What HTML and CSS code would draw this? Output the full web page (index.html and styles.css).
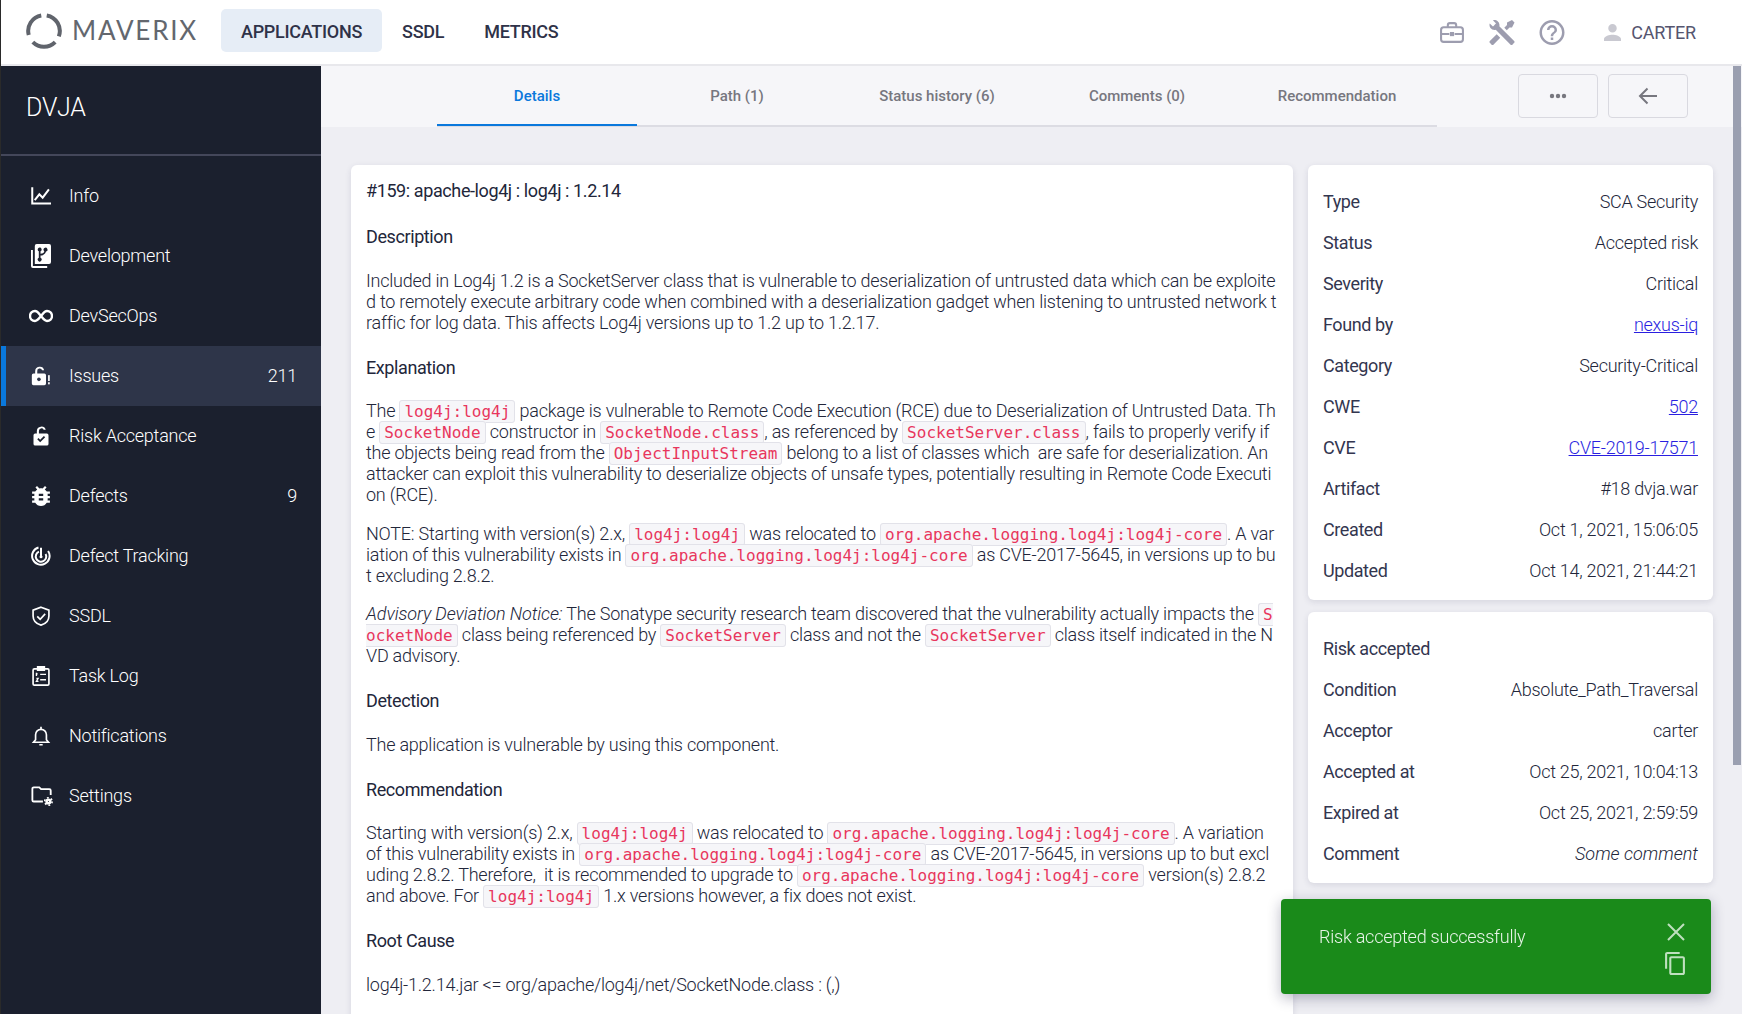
FILE: index.html
```html
<!DOCTYPE html>
<html lang="en">
<head>
    <meta charset="UTF-8">
    <title>Maverix - Issue details</title>
    <link rel="stylesheet" href="styles.css">
</head>
<body>
    <header class="topbar">
        <div class="logo">
            <svg class="logo-mark" viewBox="0 0 36 36" fill="none" stroke="#60646c" stroke-width="4">
                <path d="M15.26 2.44A15.800 15.800 0 0 0 2.74 22.090"/>
                <path d="M20.74 2.44A15.800 15.800 0 0 1 32.850 23.400"/>
                <path d="M29.170 29.170A15.800 15.800 0 0 1 6.830 29.170"/>
            </svg>
            <span class="logo-text">MAVERIX</span>
        </div>
        <nav class="topnav">
            <a class="topnav-link active">APPLICATIONS</a>
            <a class="topnav-link">SSDL</a>
            <a class="topnav-link">METRICS</a>
        </nav>
        <div class="top-tools">
            <svg class="tool-icon" viewBox="0 0 24 24" fill="none" stroke="#9d9daf" stroke-width="2">
                <path d="M8 7V5a2 2 0 0 1 2-2h4a2 2 0 0 1 2 2v2"/>
                <rect x="1.500" y="7" width="21" height="14" rx="2.500"/>
                <path d="M1.500 13.500H9.500M14.500 13.500H22.500"/>
                <rect x="10" y="11.500" width="4" height="4" fill="#9d9daf" stroke="none"/>
            </svg>
            <svg class="tool-icon" viewBox="2 2 20 20" fill="#9d9daf"><path d="M21.710 20.290L20.290 21.710A1 1 0 0 1 18.880 21.710L7 9.850A3.810 3.810 0 0 1 6 10A4 4 0 0 1 2.220 4.700L4.760 7.240L5.290 6.710L6.710 5.290L7.240 4.760L4.700 2.220A4 4 0 0 1 10 6A3.810 3.810 0 0 1 9.850 7L21.710 18.880A1 1 0 0 1 21.710 20.290M2.290 18.880A1 1 0 0 0 2.290 20.290L3.710 21.710A1 1 0 0 0 5.120 21.710L10.590 16.250L7.760 13.420M20 2L16 4V6L13.830 8.170L15.830 10.170L18 8H20L22 4Z"/></svg>
            <svg class="tool-icon" viewBox="2 2 20 20" fill="#9d9daf"><path d="M11,18H13V16H11V18M12,2A10,10 0 0,0 2,12A10,10 0 0,0 12,22A10,10 0 0,0 22,12A10,10 0 0,0 12,2M12,20C7.590,20 4,16.410 4,12C4,7.590 7.590,4 12,4C16.410,4 20,7.590 20,12C20,16.410 16.410,20 12,20M12,6A4,4 0 0,0 8,10H10A2,2 0 0,1 12,8A2,2 0 0,1 14,10C14,12 11,11.750 11,15H13C13,12.750 16,12.500 16,10A4,4 0 0,0 12,6Z"/></svg>
            <div class="user">
                <svg class="user-icon" viewBox="4 4 16 16" fill="#c9c9d1"><path d="M12 12c2.210 0 4-1.790 4-4s-1.790-4-4-4-4 1.790-4 4 1.790 4 4 4zm0 2c-2.670 0-8 1.340-8 4v2h16v-2c0-2.660-5.330-4-8-4z"/></svg>
                <span>CARTER</span>
            </div>
        </div>
    </header>

    <div class="app">
        <aside class="sidebar">
            <div class="sidebar-title">DVJA</div>
            <ul class="menu">
                <li class="menu-item">
                    <svg class="menu-icon" viewBox="0 0 24 24" fill="none" stroke="#fff" stroke-width="2.400"><path d="M1.500 1.500V21H24"/><path d="M4.500 17L10 10L14 14L21.500 4"/></svg>
                    <span>Info</span>
                </li>
                <li class="menu-item">
                    <svg class="menu-icon" viewBox="2 0 21 24" preserveAspectRatio="none" fill="#fff"><path d="M2 6H4V22H19V24H4A2 2 0 0 1 2 22Z"/><path fill-rule="evenodd" d="M8 0H21A2 2 0 0 1 23 2V18A2 2 0 0 1 21 20H6V2A2 2 0 0 1 8 0ZM11 3.500A2 2 0 0 0 10.200 7.300V13.700A2 2 0 1 0 12 13.700V11.500C14.500 11.500 17 10.500 17.800 7.600A2 2 0 1 0 16 7.200C15.600 9 13.800 9.600 12 9.700V7.300A2 2 0 0 0 11 3.500Z"/></svg>
                    <span>Development</span>
                </li>
                <li class="menu-item">
                    <svg class="menu-icon menu-icon-wide" viewBox="0 0 24 24" fill="none" stroke="#fff" stroke-width="2.400"><path d="M12 12C10 9.500 8.500 7 6 7A5 5 0 0 0 6 17C8.500 17 10 14.500 12 12C14 9.500 15.500 7 18 7A5 5 0 0 1 18 17C15.500 17 14 14.500 12 12Z"/></svg>
                    <span>DevSecOps</span>
                </li>
                <li class="menu-item active">
                    <svg class="menu-icon" viewBox="0 0 24 24" fill="#fff"><path d="M5 9V6.500A5.500 5.500 0 0 1 15.800 5H13.300A3 3 0 0 0 7.500 6.500V9H16A2 2 0 0 1 18 11V21A2 2 0 0 1 16 23H3A2 2 0 0 1 1 21V11A2 2 0 0 1 3 9Z"/><circle cx="9.500" cy="16" r="2.200" fill="#2e3549"/><rect x="20.500" y="11" width="2" height="7"/><rect x="20.500" y="19.500" width="2" height="2.500"/></svg>
                    <span>Issues</span>
                    <span class="menu-count">211</span>
                </li>
                <li class="menu-item">
                    <svg class="menu-icon" viewBox="0 0 24 24" fill="#fff"><path fill-rule="evenodd" d="M7 9V6A5.500 5.500 0 0 1 17.700 4.500H15.200A3 3 0 0 0 9.500 6V9H19A2 2 0 0 1 21 11V21.500A2 2 0 0 1 19 23.500H5A2 2 0 0 1 3 21.500V11A2 2 0 0 1 5 9ZM7.500 16L9 14.500L11 16.500L15.500 12L17 13.500L11 19.500Z"/></svg>
                    <span>Risk Acceptance</span>
                </li>
                <li class="menu-item">
                    <svg class="menu-icon" viewBox="3 2 18 20" fill="#fff"><path d="M14,12H10V10H14M14,16H10V14H14M20,8H17.190C16.740,7.220 16.120,6.550 15.370,6.040L17,4.410L15.590,3L13.420,5.170C12.960,5.060 12.500,5 12,5C11.500,5 11.040,5.060 10.590,5.170L8.410,3L7,4.410L8.620,6.040C7.880,6.550 7.260,7.220 6.810,8H4V10H6.090C6.040,10.330 6,10.660 6,11V12H4V14H6V15C6,15.340 6.040,15.670 6.090,16H4V18H6.810C7.850,19.790 9.780,21 12,21C14.220,21 16.150,19.790 17.190,18H20V16H17.910C17.960,15.670 18,15.340 18,15V14H20V12H18V11C18,10.660 17.960,10.330 17.910,10H20V8Z"/></svg>
                    <span>Defects</span>
                    <span class="menu-count">9</span>
                </li>
                <li class="menu-item">
                    <svg class="menu-icon" viewBox="0 0 24 24" fill="none" stroke="#fff" stroke-width="2.400"><path d="M9 1.800A10.500 10.500 0 1 0 20.500 6"/><path d="M9.500 6.800A6.300 6.300 0 1 0 17.500 9.500"/><path d="M12 2V13"/><circle cx="12" cy="13" r="1.800" fill="#fff" stroke="none"/></svg>
                    <span>Defect Tracking</span>
                </li>
                <li class="menu-item">
                    <svg class="menu-icon" viewBox="0 0 24 24" fill="none" stroke="#fff" stroke-width="2"><path d="M12 1.500L21.500 5V12C21.500 17.500 17.500 21.500 12 23C6.500 21.500 2.500 17.500 2.500 12V5Z"/><path d="M7.500 12.500L11 16L17 9.500"/></svg>
                    <span>SSDL</span>
                </li>
                <li class="menu-item">
                    <svg class="menu-icon" viewBox="0 0 24 24" fill="none" stroke="#fff" stroke-width="2"><rect x="2.500" y="3.500" width="19" height="19.500" rx="1.500"/><rect x="8" y="1" width="8" height="4" fill="#fff"/><path d="M6.500 9.500H8M6.500 8V12M11 10H18M6.500 15H8.500L6.500 18.500H9M11 16.500H18" stroke-width="1.600"/></svg>
                    <span>Task Log</span>
                </li>
                <li class="menu-item">
                    <svg class="menu-icon" viewBox="0 0 24 24" fill="none" stroke="#fff" stroke-width="2"><path d="M3 19.500H21L18.500 16.500V10.500A6.500 6.500 0 0 0 5.500 10.500V16.500Z"/><path d="M12 1V4M10 22.500H14"/></svg>
                    <span>Notifications</span>
                </li>
                <li class="menu-item">
                    <svg class="menu-icon menu-icon-folder" viewBox="0 0 24 22" fill="none" stroke="#fff" stroke-width="2"><path d="M13 17H3A1.500 1.500 0 0 1 1.500 15.500V3A1.500 1.500 0 0 1 3 1.500H9L11 3.500H20A1.500 1.500 0 0 1 21.500 5V10"/><circle cx="19" cy="17" r="2" stroke-width="2.800"/><circle cx="19" cy="17" r="4.100" stroke-width="1.700" stroke-dasharray="2 2.300"/></svg>
                    <span>Settings</span>
                </li>
            </ul>
        </aside>

        <main class="main">
            <div class="tabbar">
                <div class="tabs">
                    <a class="tab active">Details</a>
                    <a class="tab">Path (1)</a>
                    <a class="tab">Status history (6)</a>
                    <a class="tab">Comments (0)</a>
                    <a class="tab">Recommendation</a>
                </div>
                <div class="tab-buttons">
                    <button class="tab-button">
                        <svg width="18" height="6" viewBox="0 0 18 6" fill="#77777f"><circle cx="3" cy="3" r="2.200"/><circle cx="9" cy="3" r="2.200"/><circle cx="15" cy="3" r="2.200"/></svg>
                    </button>
                    <button class="tab-button">
                        <svg width="20" height="18" viewBox="0 0 20 18" fill="none" stroke="#77777f" stroke-width="2"><path d="M19 9H2M9.500 1.500L2 9L9.500 16.500"/></svg>
                    </button>
                </div>
            </div>

            <div class="content">
                <article class="card issue">
                    <h1 class="issue-title">#159: apache-log4j : log4j : 1.2.14</h1>
                    <h2>Description</h2>
                    <p>Included in Log4j 1.2 is a SocketServer class that is vulnerable to deserialization of untrusted data which can be exploited to remotely execute arbitrary code when combined with a deserialization gadget when listening to untrusted network traffic for log data. This affects Log4j versions up to 1.2 up to 1.2.17.</p>
                    <h2>Explanation</h2>
                    <p>The <code>log4j:log4j</code> package is vulnerable to Remote Code Execution (RCE) due to Deserialization of Untrusted Data. The <code>SocketNode</code> constructor in <code>SocketNode.class</code>, as referenced by <code>SocketServer.class</code>, fails to properly verify if the objects being read from the <code>ObjectInputStream</code> belong to a list of classes which &nbsp;are safe for deserialization. An attacker can exploit this vulnerability to deserialize objects of unsafe types, potentially resulting in Remote Code Execution (RCE).</p>
                    <p>NOTE: Starting with version(s) 2.x, <code>log4j:log4j</code> was relocated to <code>org.apache.logging.log4j:log4j-core</code>. A variation of this vulnerability exists in <code>org.apache.logging.log4j:log4j-core</code> as CVE-2017-5645, in versions up to but excluding 2.8.2.</p>
                    <p><em>Advisory Deviation Notice:</em> The Sonatype security research team discovered that the vulnerability actually impacts the <code>SocketNode</code> class being referenced by <code>SocketServer</code> class and not the <code>SocketServer</code> class itself indicated in the NVD advisory.</p>
                    <h2>Detection</h2>
                    <p>The application is vulnerable by using this component.</p>
                    <h2>Recommendation</h2>
                    <p>Starting with version(s) 2.x, <code>log4j:log4j</code> was relocated to <code>org.apache.logging.log4j:log4j-core</code>. A variation of this vulnerability exists in <code>org.apache.logging.log4j:log4j-core</code> as CVE-2017-5645, in versions up to but excluding 2.8.2. Therefore, &nbsp;it is recommended to upgrade to <code>org.apache.logging.log4j:log4j-core</code> version(s) 2.8.2 and above. For <code>log4j:log4j</code> 1.x versions however, a fix does not exist.</p>
                    <h2>Root Cause</h2>
                    <p>log4j-1.2.14.jar &lt;= org/apache/log4j/net/SocketNode.class : (,)</p>
                </article>

                <div class="side">
                    <section class="card facts">
                        <div class="fact"><span class="fact-label">Type</span><span>SCA Security</span></div>
                        <div class="fact"><span class="fact-label">Status</span><span>Accepted risk</span></div>
                        <div class="fact"><span class="fact-label">Severity</span><span>Critical</span></div>
                        <div class="fact"><span class="fact-label">Found by</span><a href="#">nexus-iq</a></div>
                        <div class="fact"><span class="fact-label">Category</span><span>Security-Critical</span></div>
                        <div class="fact"><span class="fact-label">CWE</span><a href="#">502</a></div>
                        <div class="fact"><span class="fact-label">CVE</span><a href="#">CVE-2019-17571</a></div>
                        <div class="fact"><span class="fact-label">Artifact</span><span>#18 dvja.war</span></div>
                        <div class="fact"><span class="fact-label">Created</span><span>Oct 1, 2021, 15:06:05</span></div>
                        <div class="fact"><span class="fact-label">Updated</span><span>Oct 14, 2021, 21:44:21</span></div>
                    </section>
                    <section class="card facts">
                        <div class="fact"><span class="fact-label">Risk accepted</span></div>
                        <div class="fact"><span class="fact-label">Condition</span><span>Absolute_Path_Traversal</span></div>
                        <div class="fact"><span class="fact-label">Acceptor</span><span>carter</span></div>
                        <div class="fact"><span class="fact-label">Accepted at</span><span>Oct 25, 2021, 10:04:13</span></div>
                        <div class="fact"><span class="fact-label">Expired at</span><span>Oct 25, 2021, 2:59:59</span></div>
                        <div class="fact"><span class="fact-label">Comment</span><em>Some comment</em></div>
                    </section>
                </div>
            </div>
            <div class="scroll-thumb"></div>
        </main>
    </div>

    <div class="toast">
        <span class="toast-text">Risk accepted successfully</span>
        <div class="toast-actions">
            <svg width="18" height="18" viewBox="0 0 18 18" fill="none" stroke="#bfe0bf" stroke-width="2"><path d="M1 1L17 17M17 1L1 17"/></svg>
            <svg width="20" height="23" viewBox="2 1 19 22" fill="#bfe0bf"><path d="M16 1H4c-1.100 0-2 .9-2 2v14h2V3h12V1zm3 4H8c-1.100 0-2 .9-2 2v14c0 1.100.9 2 2 2h11c1.100 0 2-.9 2-2V7c0-1.100-.9-2-2-2zm0 16H8V7h11v14z"/></svg>
        </div>
    </div>
</body>
</html>
```

FILE: styles.css
```css
:root {
    --navy: #1b202e;
    --navy-light: #2e3549;
    --blue: #0a78dc;
    --page: #eeeef3;
    --ink: #22263a;
    --line: #dcdce3;
}

* {
    margin: 0;
    padding: 0;
    box-sizing: border-box;
}

html, body {
    height: 100%;
    overflow: hidden;
}

body {
    font-family: Roboto, Arial, sans-serif;
    font-size: 18px;
    line-height: 21px;
    color: var(--ink);
    background-color: white;
    border-left: 1px solid #2a2a2a;
}

/* top bar */
.topbar {
    height: 66px;
    display: flex;
    align-items: center;
    border-bottom: 2px solid #e8e8ec;
    padding: 0 46px 3px 0;
}

.logo {
    display: flex;
    align-items: center;
    margin-left: 25px;
    width: 195px;
}

.logo-mark {
    width: 36px;
    height: 36px;
}

.logo-text {
    font-family: Lato, Arial, sans-serif;
    font-size: 26px;
    letter-spacing: 1.8px;
    color: #63676e;
    margin-left: 10px;
}

.topnav {
    display: flex;
}

.topnav-link {
    height: 43px;
    display: flex;
    align-items: center;
    padding: 1px 20px 0;
    font-weight: 500;
    letter-spacing: -0.28px;
    color: #2f3248;
    border-radius: 5px;
}

.topnav-link.active {
    background-color: #e6edf6;
}

.top-tools {
    margin: 3px 0 0 auto;
    display: flex;
    align-items: center;
    gap: 24px;
}

.tool-icon {
    width: 26px;
    height: 25px;
}

.user {
    display: flex;
    align-items: center;
    gap: 10px;
    margin-left: 15px;
    letter-spacing: -0.2px;
    color: #55556f;
}

.user-icon {
    width: 17px;
    height: 17px;
}

/* layout */
.app {
    display: flex;
    height: calc(100vh - 66px);
}

.sidebar {
    width: 320px;
    flex-shrink: 0;
    background-color: var(--navy);
    color: white;
    font-weight: 300;
    letter-spacing: -0.23px;
}

.sidebar-title {
    height: 90px;
    padding: 28px 0 0 25px;
    font-size: 25px;
    line-height: 28px;
    border-bottom: 2px solid #44475a;
}

.menu {
    list-style: none;
    margin-top: 10px;
}

.menu-item {
    height: 60px;
    display: flex;
    align-items: center;
    padding: 0 24px 1px 30px;
}

.menu-item.active {
    background-color: var(--navy-light);
    box-shadow: inset 5px 0 0 var(--blue);
}

.menu-icon {
    width: 20px;
    height: 24px;
    margin-right: 18px;
    flex-shrink: 0;
}

.menu-icon-wide {
    width: 24px;
    margin: 0 16px 0 -2px;
}

.menu-icon-folder {
    width: 22px;
    margin-right: 16px;
}

.menu-count {
    margin-left: auto;
}

.main {
    flex: 1;
    min-width: 0;
    position: relative;
    background-color: var(--page);
}

/* tabs */
.tabbar {
    height: 61px;
    display: flex;
    background-color: #f6f6f9;
}

.tabs {
    display: flex;
    margin-left: 116px;
    border-bottom: 2px solid var(--line);
}

.tab {
    width: 200px;
    height: 60px;
    font-size: 15px;
    font-weight: 500;
    line-height: 60px;
    text-align: center;
    color: #77777f;
}

.tab.active {
    color: var(--blue);
    border-bottom: 2px solid var(--blue);
}

.tab-buttons {
    display: flex;
    gap: 10px;
    margin: 8px 0 0 81px;
}

.tab-button {
    width: 80px;
    height: 44px;
    display: flex;
    align-items: center;
    justify-content: center;
    background: transparent;
    border: 1px solid #d9d9e0;
    border-radius: 4px;
}

/* content */
.content {
    display: grid;
    grid-template-columns: 942px 405px;
    gap: 15px;
    padding: 38px 0 0 30px;
}

.card {
    background-color: white;
    border-radius: 6px;
    box-shadow: 0 2px 6px rgba(40, 40, 80, 0.12);
}

.issue {
    padding: 15px 16px 15px 15px;
    font-weight: 300;
    letter-spacing: -0.23px;
    word-break: break-all;
}

.issue em {
    letter-spacing: -0.1px;
}

.issue-title,
.issue h2 {
    font-size: 18px;
    font-weight: 400;
    line-height: 21px;
    letter-spacing: -0.4px;
}

.issue-title {
    margin-bottom: 25px;
}

.issue h2 {
    margin: 24px 0 22.5px;
}

.issue p {
    margin-bottom: 17.5px;
}

code {
    font-family: "DejaVu Sans Mono", monospace;
    font-size: 16px;
    line-height: 1;
    letter-spacing: 0;
    color: #e8365d;
    background-color: #f6f6f9;
    border: 1px solid #e2e2e9;
    border-radius: 3px;
    padding: 1px 4px;
}

.side {
    display: flex;
    flex-direction: column;
    gap: 12px;
}

.facts {
    padding: 15.5px 15px 9.5px;
}

.fact {
    height: 41px;
    display: flex;
    align-items: center;
    justify-content: space-between;
    font-weight: 300;
    letter-spacing: -0.27px;
}

.fact em {
    letter-spacing: 0;
}

.fact-label {
    font-weight: 400;
    letter-spacing: -0.4px;
    color: #33364f;
}

.fact a {
    color: #2a1fe0;
}

/* overlays */
.scroll-thumb {
    position: absolute;
    top: 0;
    right: 1px;
    width: 8px;
    height: 699px;
    background-color: #9a9fb0;
}

.toast {
    position: fixed;
    left: 1281px;
    top: 899px;
    width: 430px;
    height: 95px;
    padding: 27px 26px 0 38px;
    display: flex;
    justify-content: space-between;
    background-color: #1a8a1a;
    border-radius: 4px;
    box-shadow: 0 4px 14px rgba(20, 20, 60, 0.3);
    color: #e8f4e8;
    font-weight: 300;
    letter-spacing: -0.23px;
}

.toast-actions {
    display: flex;
    flex-direction: column;
    align-items: flex-end;
    gap: 11px;
    margin-top: -3px;
}
```
